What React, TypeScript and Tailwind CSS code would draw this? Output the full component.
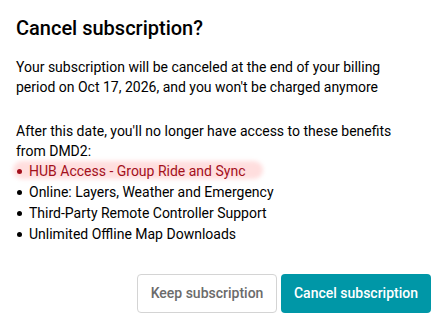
import React from 'react';

const benefits = [
  { label: 'HUB Access - Group Ride and Sync', highlight: true },
  { label: 'Online: Layers, Weather and Emergency' },
  { label: 'Third-Party Remote Controller Support' },
  { label: 'Unlimited Offline Map Downloads' },
];

export default function App() {
  return (
    <div className="w-[440px] h-[323px] bg-white text-black font-['Roboto',sans-serif] overflow-hidden pt-[14px]">
      <div className="pl-4 pr-[19px]">
        <h2 className="text-[20px] leading-[28px] font-medium">Cancel subscription?</h2>

        <p className="mt-[15px] text-[14px] leading-[20px]">
          Your subscription will be canceled at the end of your billing period on Oct 17, 2026, and you won't be charged anymore
        </p>

        <p className="mt-[24px] text-[14px] leading-[20px]">
          After this date, you'll no longer have access to these benefits from DMD2:
        </p>

        <ul className="text-[14px] leading-[21px]">
          {benefits.map((b) => (
            <li key={b.label} className={`relative flex items-center ${b.highlight ? 'text-[#a3101c]' : ''}`}>
              {b.highlight && (
                <span className="absolute -left-[3px] w-[250px] top-[0px] h-[18px] rounded-full bg-[#ff5a5a]/20 blur-[2px]" />
              )}
              <span className={`relative ml-[1px] w-[5px] h-[5px] rounded-full ${b.highlight ? 'bg-[#a3101c]' : 'bg-black'}`} />
              <span className="relative ml-[7px]">{b.label}</span>
            </li>
          ))}
        </ul>
      </div>

      <div className="mt-[29px] pr-[9px] flex justify-end gap-[4px]">
        <button className="w-[140px] h-[39px] rounded-[4px] border border-[#d4d4d4] bg-white text-[14px] font-medium text-[#6b6b6b]">
          Keep subscription
        </button>
        <button className="w-[150px] h-[39px] rounded-[4px] bg-[#0097a7] text-[14px] font-medium text-white">
          Cancel subscription
        </button>
      </div>
    </div>
  );
}
